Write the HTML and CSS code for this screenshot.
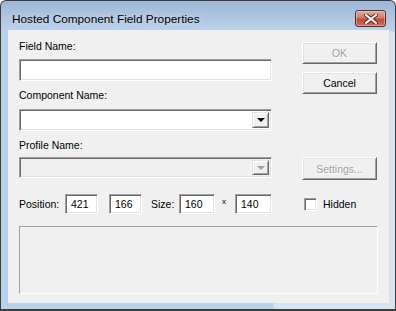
FILE: index.html
```html
<!DOCTYPE html>
<html lang="en">
<head>
    <meta charset="UTF-8">
    <title>Hosted Component Field Properties</title>
    <link rel="stylesheet" href="styles.css">
</head>
<body>
    <div class="window">
        <div class="titlebar">
            <span class="title">Hosted Component Field Properties</span>
            <div class="close">
                <svg width="14" height="10" viewBox="0 0 14 10">
                    <path d="M2 1 L12 9 M12 1 L2 9" stroke="#6b2020" stroke-width="4" stroke-linecap="square"/>
                    <path d="M2 1 L12 9 M12 1 L2 9" stroke="#ffffff" stroke-width="2" stroke-linecap="square"/>
                </svg>
            </div>
        </div>
        <div class="client">
            <div class="top">
                <div class="fields">
                    <div class="label first">Field Name:</div>
                    <div class="edit wide"></div>
                    <div class="label second">Component Name:</div>
                    <div class="combo">
                        <div class="drop"><span class="arrow"></span></div>
                    </div>
                    <div class="label third">Profile Name:</div>
                    <div class="combo disabled">
                        <div class="drop"><span class="arrow"></span></div>
                    </div>
                </div>
                <div class="buttons">
                    <div class="btn off ok">OK</div>
                    <div class="btn cancel">Cancel</div>
                    <div class="btn off settings">Settings...</div>
                </div>
            </div>
            <div class="pos-row">
                <span class="txt pos-lbl">Position:</span>
                <div class="edit small pos-x">421</div>
                <div class="edit small pos-y">166</div>
                <span class="txt size-lbl">Size:</span>
                <div class="edit small size-w">160</div>
                <span class="times">x</span>
                <div class="edit small size-h">140</div>
                <span class="check"></span>
                <span class="txt">Hidden</span>
            </div>
            <div class="groupbox"></div>
        </div>
    </div>
</body>
</html>
```

FILE: styles.css
```css
body {
    margin: 0;
    background: #ffffff;
    font-family: "Liberation Sans", Arial, sans-serif;
    font-size: 10.5px;
    color: #000;
}
.window {
    width: 396px;
    height: 311px;
    box-sizing: border-box;
    border: 1px solid #3d3d3d;
    border-bottom-width: 2px;
    border-radius: 6px 6px 0 0;
    padding: 0 6px 6px 7px;
    background:
        linear-gradient(to bottom, #9db7d6 0, #bcd2ea 30px, rgba(188,210,234,0) 31px),
        linear-gradient(to right, #b9d1ea 0, #b9d1ea 272px, #d6e4f2 273px, #d6e4f2 100%);
    display: flex;
    flex-direction: column;
}
.titlebar {
    height: 29px;
    display: flex;
    align-items: flex-start;
    justify-content: space-between;
}
.title {
    font-size: 11.8px;
    margin: 11px 0 0 4px;
    line-height: 14px;
    text-shadow: 0 0 6px rgba(255,255,255,0.7);
}
.close {
    width: 31px;
    height: 17px;
    box-sizing: border-box;
    margin: 9px 3px 0 0;
    border: 1px solid #5a2a24;
    border-radius: 3px;
    background: linear-gradient(to bottom, #e0a797 0, #d47e6c 45%, #c14c38 55%, #cf6b55 100%);
    box-shadow: inset 0 0 0 1px rgba(255,255,255,0.35);
    display: flex;
    align-items: center;
    justify-content: center;
}
.client {
    flex: 1;
    background: #f0f0f0;
    padding: 10px 0 0 11px;
}
.top {
    display: flex;
    gap: 30px;
}
.fields {
    width: 253px;
    display: flex;
    flex-direction: column;
}
.label {
    line-height: 13px;
    height: 13px;
}
.first { margin-bottom: 6px; }
.second { margin: 8px 0 7px; }
.third { margin: 8px 0 5px; }

.edit {
    box-sizing: border-box;
    background: #fff;
    border-top: 1px solid #a0a0a0;
    border-left: 1px solid #a0a0a0;
    border-bottom: 1px solid #fff;
    border-right: 1px solid #fff;
    box-shadow: inset 1px 1px 0 #696969, inset -1px -1px 0 #e3e3e3;
}
.wide { height: 22px; }
.combo {
    height: 22px;
    box-sizing: border-box;
    background: #fff;
    border-top: 1px solid #a0a0a0;
    border-left: 1px solid #a0a0a0;
    border-bottom: 1px solid #fff;
    border-right: 1px solid #fff;
    box-shadow: inset 1px 1px 0 #696969, inset -1px -1px 0 #e3e3e3;
    display: flex;
    justify-content: flex-end;
    padding: 2px;
}
.combo.disabled {
    height: 21px;
    background: #f0f0f0;
}
.drop {
    width: 17px;
    box-sizing: border-box;
    background: #f0f0f0;
    border-top: 1px solid #e3e3e3;
    border-left: 1px solid #e3e3e3;
    border-bottom: 1px solid #696969;
    border-right: 1px solid #696969;
    box-shadow: inset 1px 1px 0 #fff, inset -1px -1px 0 #a0a0a0;
    display: flex;
    align-items: center;
    justify-content: center;
}
.arrow {
    width: 0;
    height: 0;
    border-left: 4px solid transparent;
    border-right: 4px solid transparent;
    border-top: 4px solid #000;
}
.disabled .arrow {
    border-top-color: #a0a0a0;
}

.buttons {
    width: 75px;
    display: flex;
    flex-direction: column;
}
.btn {
    box-sizing: border-box;
    height: 22px;
    display: flex;
    align-items: center;
    justify-content: center;
    background: #f0f0f0;
    border-top: 1px solid #fff;
    border-left: 1px solid #fff;
    border-bottom: 1px solid #696969;
    border-right: 1px solid #696969;
    box-shadow: inset 1px 1px 0 #e3e3e3, inset -1px -1px 0 #a0a0a0;
}
.btn.off {
    color: #a0a0a0;
    text-shadow: 1px 1px 0 #fff;
}
.ok { margin-top: 2px; }
.cancel { margin-top: 8px; }
.settings { margin-top: 63px; height: 23px; }

.pos-row {
    display: flex;
    align-items: center;
    height: 20px;
    margin-top: 14px;
}
.small {
    height: 20px;
    line-height: 18px;
    padding-left: 5px;
}
.pos-lbl { width: 46px; }
.pos-x { width: 33px; }
.pos-y { width: 33px; margin-left: 11px; }
.size-lbl { width: 28px; margin-left: 9px; }
.size-w { width: 36px; }
.times {
    width: 13px;
    padding-left: 7px;
    margin-bottom: 5px;
    font-size: 8px;
}
.size-h { width: 37px; }
.check {
    width: 13px;
    height: 13px;
    box-sizing: border-box;
    margin: 0 6px 0 32px;
    background: #fff;
    border-top: 1px solid #a0a0a0;
    border-left: 1px solid #a0a0a0;
    border-bottom: 1px solid #fff;
    border-right: 1px solid #fff;
    box-shadow: inset 1px 1px 0 #696969, inset -1px -1px 0 #e3e3e3;
}
.groupbox {
    width: 359px;
    height: 68px;
    box-sizing: border-box;
    margin-top: 12px;
    border-top: 1px solid #a0a0a0;
    border-left: 1px solid #a0a0a0;
    border-bottom: 1px solid #fff;
    border-right: 1px solid #fff;
}
```
